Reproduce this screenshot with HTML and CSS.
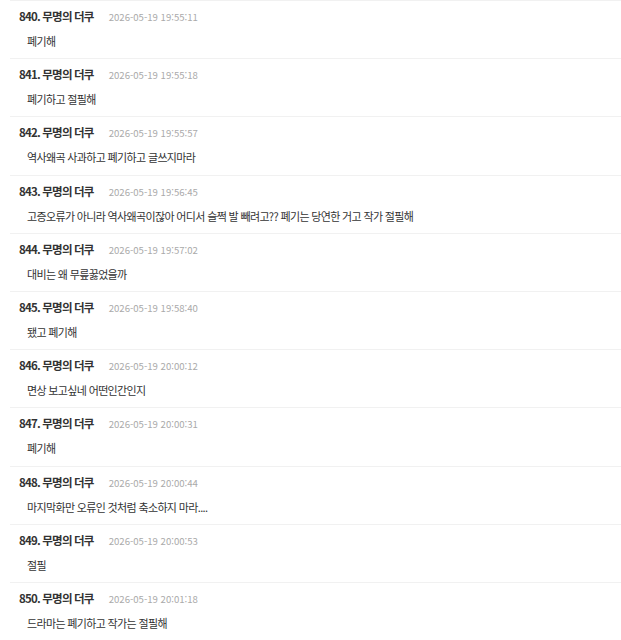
FILE: index.html
```html
<!DOCTYPE html>
<html lang="ko">
<head>
<meta charset="utf-8">
<link rel="stylesheet" href="styles.css">
</head>
<body>
<ul class="comments">
  <li class="comment"><div class="head"><span class="name">840. 무명의 더쿠</span><span class="time">2026-05-19 19:55:11</span></div><p class="text">폐기해</p></li>
  <li class="comment"><div class="head"><span class="name">841. 무명의 더쿠</span><span class="time">2026-05-19 19:55:18</span></div><p class="text">폐기하고 절필해</p></li>
  <li class="comment"><div class="head"><span class="name">842. 무명의 더쿠</span><span class="time">2026-05-19 19:55:57</span></div><p class="text">역사왜곡 사과하고 폐기하고 글쓰지마라</p></li>
  <li class="comment"><div class="head"><span class="name">843. 무명의 더쿠</span><span class="time">2026-05-19 19:56:45</span></div><p class="text">고증오류가 아니라 역사왜곡이잖아 어디서 슬쩍 발 빼려고?? 폐기는 당연한 거고 작가 절필해</p></li>
  <li class="comment"><div class="head"><span class="name">844. 무명의 더쿠</span><span class="time">2026-05-19 19:57:02</span></div><p class="text">대비는 왜 무릎꿇었을까</p></li>
  <li class="comment"><div class="head"><span class="name">845. 무명의 더쿠</span><span class="time">2026-05-19 19:58:40</span></div><p class="text">됐고 폐기해</p></li>
  <li class="comment"><div class="head"><span class="name">846. 무명의 더쿠</span><span class="time">2026-05-19 20:00:12</span></div><p class="text">면상 보고싶네 어떤인간인지</p></li>
  <li class="comment"><div class="head"><span class="name">847. 무명의 더쿠</span><span class="time">2026-05-19 20:00:31</span></div><p class="text">폐기해</p></li>
  <li class="comment"><div class="head"><span class="name">848. 무명의 더쿠</span><span class="time">2026-05-19 20:00:44</span></div><p class="text">마지막화만 오류인 것처럼 축소하지 마라....</p></li>
  <li class="comment"><div class="head"><span class="name">849. 무명의 더쿠</span><span class="time">2026-05-19 20:00:53</span></div><p class="text">절필</p></li>
  <li class="comment"><div class="head"><span class="name">850. 무명의 더쿠</span><span class="time">2026-05-19 20:01:18</span></div><p class="text">드라마는 폐기하고 작가는 절필해</p></li>
</ul>
</body>
</html>
```
FILE: styles.css
```css
html, body {
  margin: 0;
  padding: 0;
  background: #fff;
}
body {
  font-family: "Noto Sans CJK KR", "Noto Sans", sans-serif;
  color: #333;
}
.comments {
  list-style: none;
  margin: 0;
  padding: 0 0 0 10px;
}
.comment {
  border-top: 1px solid #f1f1f1;
  padding: 7px 0 9.2px 9px;
}
.head {
  display: flex;
  align-items: baseline;
  height: 16px;
  line-height: 16px;
}
.name {
  font-size: 11.5px;
  font-weight: 700;
  letter-spacing: -0.8px;
  color: #333;
}
.time {
  margin-left: 15px;
  font-size: 9.6px;
  color: #aaa;
}
.text {
  margin: 9px 0 0 8px;
  font-size: 11px;
  letter-spacing: -0.65px;
  line-height: 16px;
  color: #333;
}
```
